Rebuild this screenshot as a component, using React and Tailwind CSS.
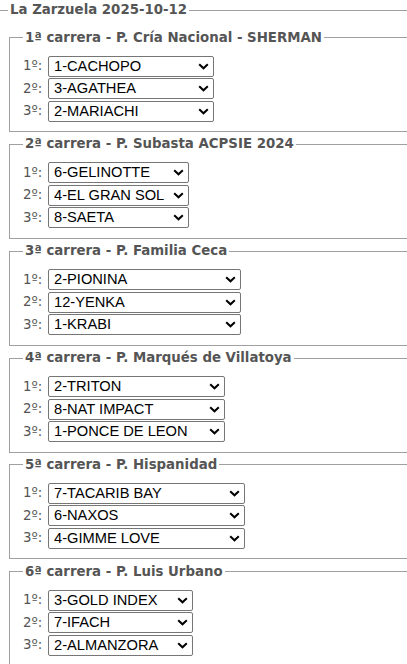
import React from "react";

const races = [
  { title: "1ª carrera - P. Cría Nacional - SHERMAN", w: "w-[166px]", picks: ["1-CACHOPO", "3-AGATHEA", "2-MARIACHI"] },
  { title: "2ª carrera - P. Subasta ACPSIE 2024", w: "w-[141px]", picks: ["6-GELINOTTE", "4-EL GRAN SOL", "8-SAETA"] },
  { title: "3ª carrera - P. Familia Ceca", w: "w-[193px]", picks: ["2-PIONINA", "12-YENKA", "1-KRABI"] },
  { title: "4ª carrera - P. Marqués de Villatoya", w: "w-[177px]", picks: ["2-TRITON", "8-NAT IMPACT", "1-PONCE DE LEON"] },
  { title: "5ª carrera - P. Hispanidad", w: "w-[197px]", picks: ["7-TACARIB BAY", "6-NAXOS", "4-GIMME LOVE"] },
  { title: "6ª carrera - P. Luis Urbano", w: "w-[145px]", picks: ["3-GOLD INDEX", "7-IFACH", "2-ALMANZORA"] },
];

function Pick({ label, value, w }) {
  return (
    <div className="flex items-center">
      <span className="w-[25px] text-[13.33px] leading-[18px] text-[#555] [font-family:'DejaVu_Sans',Verdana,sans-serif]">
        {label}
      </span>
      <span className={`relative block h-[21px] ${w}`}>
        <select
          defaultValue={value}
          className="block h-[21px] w-full appearance-none rounded-[2px] border border-[#767676] bg-white pl-[5px] pr-[18px] text-[14.67px] leading-[19px] text-black [font-family:'Liberation_Sans',Arial,sans-serif]"
        >
          <option value={value}>{value}</option>
        </select>
        <svg
          className="pointer-events-none absolute right-[5px] top-[7px]"
          width="11"
          height="7"
          viewBox="0 0 11 7"
          fill="none"
        >
          <path d="M1.2 1.2 L5.5 5.3 L9.8 1.2" stroke="#000" strokeWidth="2" />
        </svg>
      </span>
    </div>
  );
}

export default function App() {
  return (
    <div className="w-[407px] h-[664px] overflow-hidden bg-white pt-[1px]">
      <fieldset className="-ml-[2px] w-[440px] border border-[#a0a0a0] pl-[9px] pt-[9.7px]">
        <legend className="px-[2px] text-[13.33px] font-bold leading-[18px] text-[#555] [font-family:'DejaVu_Sans',Verdana,sans-serif]">
          La Zarzuela 2025-10-12
        </legend>
        <div className="flex flex-col gap-[3.3px]">
          {races.map((r) => (
            <fieldset
              key={r.title}
              className="ml-[1px] border border-[#a0a0a0] pl-[13px] pt-[9px] pb-[9.5px]"
            >
              <legend className="px-[2px] text-[13.33px] font-bold leading-[18px] text-[#555] [font-family:'DejaVu_Sans',Verdana,sans-serif]">
                {r.title}
              </legend>
              <div className="flex flex-col gap-[1.5px]">
                {r.picks.map((p, i) => (
                  <Pick key={i} label={`${i + 1}º:`} value={p} w={r.w} />
                ))}
              </div>
            </fieldset>
          ))}
        </div>
      </fieldset>
    </div>
  );
}
